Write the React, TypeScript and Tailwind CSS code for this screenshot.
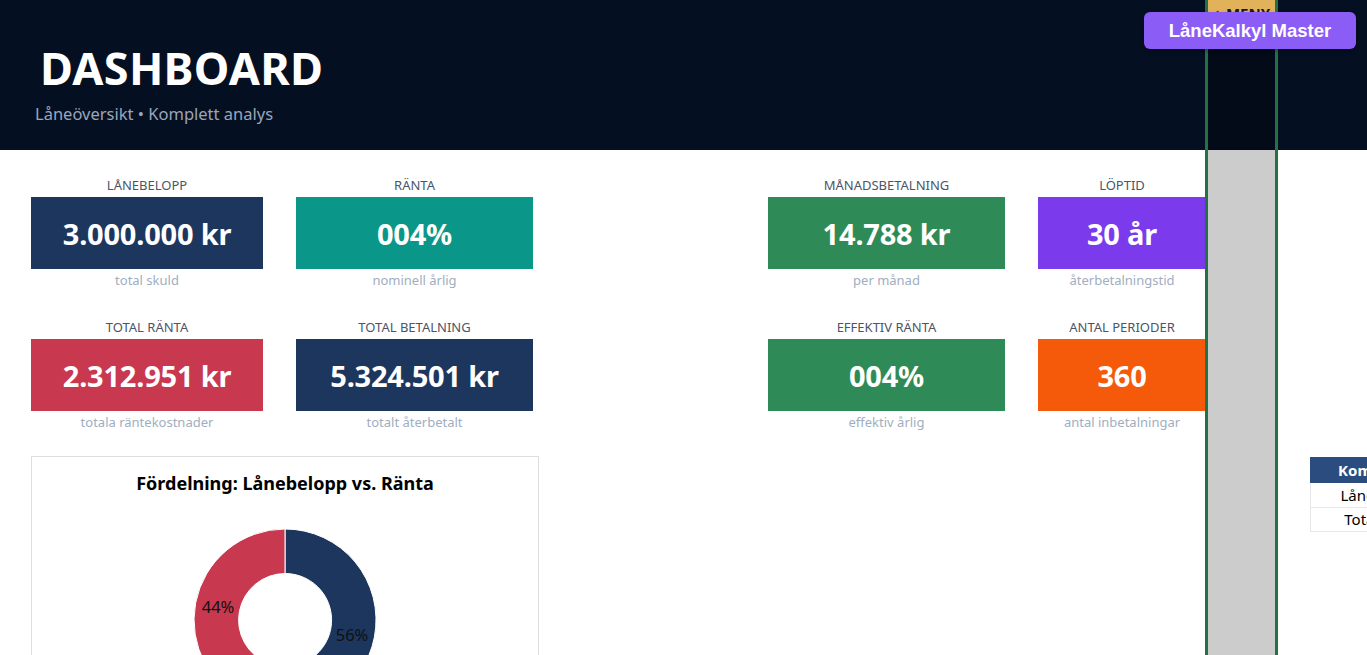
import React from "react";

type Kpi = { label: string; value: string; sub: string; bg: string; w: string };

function KpiCard({ k }: { k: Kpi }) {
  return (
    <div className={`flex flex-col items-center ${k.w}`}>
      <div className="h-[16px] text-[13px] leading-[16px] text-[#4a5568] uppercase">{k.label}</div>
      <div className={`mt-[4px] h-[72px] w-full flex items-center justify-center ${k.bg}`}>
        <span className="text-[29px] font-bold text-white leading-none tracking-[-0.2px]">{k.value}</span>
      </div>
      <div className="mt-[3px] h-[16px] text-[13px] leading-[16px] text-[#a0aec0]">{k.sub}</div>
    </div>
  );
}

const row1: Kpi[] = [
  { label: "Lånebelopp", value: "3.000.000 kr", sub: "total skuld", bg: "bg-[#1c365e]", w: "w-[232px]" },
  { label: "Ränta", value: "004%", sub: "nominell årlig", bg: "bg-[#0a9688]", w: "w-[237px]" },
  { label: "Månadsbetalning", value: "14.788 kr", sub: "per månad", bg: "bg-[#2e8b57]", w: "w-[237px]" },
  { label: "Löptid", value: "30 år", sub: "återbetalningstid", bg: "bg-[#7c3aed]", w: "w-[168px]" },
];
const row2: Kpi[] = [
  { label: "Total ränta", value: "2.312.951 kr", sub: "totala räntekostnader", bg: "bg-[#c8384f]", w: "w-[232px]" },
  { label: "Total betalning", value: "5.324.501 kr", sub: "totalt återbetalt", bg: "bg-[#1c365e]", w: "w-[237px]" },
  { label: "Effektiv ränta", value: "004%", sub: "effektiv årlig", bg: "bg-[#2e8b57]", w: "w-[237px]" },
  { label: "Antal perioder", value: "360", sub: "antal inbetalningar", bg: "bg-[#f55a0a]", w: "w-[168px]" },
];

function KpiRow({ items }: { items: Kpi[] }) {
  return (
    <div className="flex">
      <KpiCard k={items[0]} />
      <div className="ml-[33px]">
        <KpiCard k={items[1]} />
      </div>
      <div className="ml-[235px]">
        <KpiCard k={items[2]} />
      </div>
      <div className="ml-[33px]">
        <KpiCard k={items[3]} />
      </div>
    </div>
  );
}

function Donut() {
  return (
    <svg width="200" height="200" viewBox="-100 -100 200 200">
      <path
        d="M 0 -91 A 91 91 0 1 1 -33.5 84.6 L -17.1 43.2 A 46.5 46.5 0 1 0 0 -46.5 Z"
        fill="#1c365e"
        stroke="#ffffff"
        strokeWidth="1"
      />
      <path
        d="M -33.5 84.6 A 91 91 0 0 1 0 -91 L 0 -46.5 A 46.5 46.5 0 0 0 -17.1 43.2 Z"
        fill="#c8384f"
        stroke="#ffffff"
        strokeWidth="1"
      />
      <text x="-67" y="-7" textAnchor="middle" fontSize="16.5" fill="#111" fontFamily="'Noto Sans', sans-serif">
        44%
      </text>
      <text x="67" y="21" textAnchor="middle" fontSize="16.5" fill="#111" fontFamily="'Noto Sans', sans-serif">
        56%
      </text>
    </svg>
  );
}

export default function App() {
  return (
    <div className="relative w-[1367px] h-[655px] overflow-hidden bg-white font-['Noto_Sans',sans-serif]">
      {/* Header */}
      <div className="h-[150px] bg-[#050f22] pt-[43px]">
        <div className="pl-[40px] text-[45px] font-bold leading-[50px] text-white tracking-[0.3px]">DASHBOARD</div>
        <div className="pl-[35px] mt-[10px] text-[16.5px] leading-[22px] text-[#9aa6ba]">Låneöversikt • Komplett analys</div>
      </div>

      {/* Content */}
      <div className="pl-[31px] pt-[27px]">
        <KpiRow items={row1} />
        <div className="mt-[31px]">
          <KpiRow items={row2} />
        </div>

        <div className="mt-[26px] flex items-start">
          <div className="w-[508px] shrink-0 h-[260px] border border-[#dedede] flex flex-col items-center">
            <div className="mt-[15px] text-[18px] leading-[22px] font-bold text-black">
              Fördelning: Lånebelopp vs. Ränta
            </div>
            <div className="mt-[26px]">
              <Donut />
            </div>
          </div>

          <div className="ml-[771px] mt-[1px] w-[144px] shrink-0">
            <div className="h-[26px] bg-[#2b4c7e] text-white font-bold text-[15px] flex items-center justify-center">
              Komponent
            </div>
            <div className="h-[25px] border-x border-b border-[#e5e7eb] text-[15px] text-black flex items-center justify-center">
              Lånebelopp
            </div>
            <div className="h-[24px] border-x border-b border-[#e5e7eb] text-[15px] text-black flex items-center justify-center">
              Total ränta
            </div>
          </div>
        </div>
      </div>

      {/* Frozen column overlay */}
      <div className="absolute left-[1205px] top-0 w-[73px] h-full border-x-[3px] border-[#217346] flex flex-col">
        <div className="h-[150px] bg-[#030a18] relative">
          <div className="h-[36px] bg-[#e2b25a] flex items-start justify-center pt-[4px] text-[15px] leading-[18px] font-bold text-[#1a1a1a] whitespace-nowrap overflow-hidden">
            ⌂ MENY
          </div>
        </div>
        <div className="flex-1 bg-[#cccccc]" />
      </div>

      {/* Badge */}
      <div className="absolute left-[1144px] top-[12px] w-[212px] h-[37px] rounded-[6px] bg-[#8b5cf6] shadow-[0_2px_4px_rgba(0,0,0,0.3)] flex items-center justify-center">
        <span className="font-['Liberation_Sans',Arial,sans-serif] font-bold text-[18.5px] text-white">LåneKalkyl Master</span>
      </div>
    </div>
  );
}
